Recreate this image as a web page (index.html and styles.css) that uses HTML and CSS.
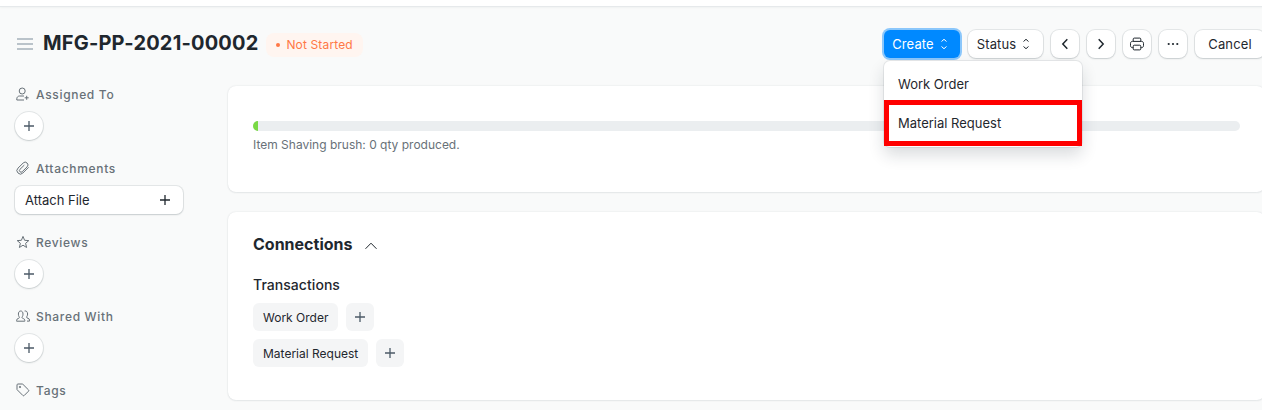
FILE: index.html
```html
<!DOCTYPE html>
<html lang="en">
<head>
<meta charset="utf-8">
<title>MFG-PP-2021-00002</title>
<link rel="stylesheet" href="styles.css">
</head>
<body>
<svg class="defs" width="0" height="0" aria-hidden="true">
  <symbol id="plus" viewBox="0 0 16 16"><path d="M8 3v10M3 8h10"/></symbol>
  <symbol id="select" viewBox="0 0 16 16"><path d="M5.5 5.500 8 3.300l2.500 2.200M5.500 10.500 8 12.700l2.500-2.200"/></symbol>
</svg>
<div class="page">
  <div class="navbar"></div>
  <header class="page-head">
    <svg class="menu" viewBox="0 0 16 12"><path d="M0 1h16M0 6h16M0 11h16"/></svg>
    <h1 class="title">MFG-PP-2021-00002</h1>
    <span class="indicator"><i class="dot"></i>Not Started</span>
    <div class="actions">
      <div class="dropdown">
        <button class="btn btn-primary">Create<svg class="icon select"><use href="#select"/></svg></button>
        <div class="dropdown-menu">
          <a class="item">Work Order</a>
          <a class="item highlighted">Material Request</a>
        </div>
      </div>
      <button class="btn btn-status">Status<svg class="icon select"><use href="#select"/></svg></button>
      <button class="btn btn-icon"><svg class="icon bold" viewBox="0 0 16 16"><path d="M10.300 3.200 5.800 8l4.500 4.800"/></svg></button>
      <button class="btn btn-icon"><svg class="icon bold" viewBox="0 0 16 16"><path d="M5.700 3.200 10.200 8l-4.500 4.800"/></svg></button>
      <button class="btn btn-icon"><svg class="icon" viewBox="0 0 16 16"><path d="M4.200 5V3.100c0-.6.4-1 1-1h5.600c.6 0 1 .4 1 1V5M4.200 11.600H3.400c-1.100 0-1.900-.8-1.900-1.900V7.300c0-1.100.8-1.900 1.900-1.900h9.200c1.100 0 1.900.8 1.900 1.900v2.400c0 1.100-.8 1.900-1.900 1.900h-.8M5.200 9.200h5.600c.6 0 1 .4 1 1v2.700c0 .6-.4 1-1 1H5.200c-.6 0-1-.4-1-1v-2.700c0-.6.4-1 1-1z"/></svg></button>
      <button class="btn btn-icon"><svg class="icon solid" viewBox="0 0 16 16"><circle cx="3.700" cy="8" r="1.100"/><circle cx="8" cy="8" r="1.100"/><circle cx="12.300" cy="8" r="1.100"/></svg></button>
      <button class="btn btn-cancel">Cancel</button>
    </div>
  </header>
  <div class="body">
    <aside class="sidebar">
      <section class="side-section">
        <h2 class="label"><svg class="side-icon" viewBox="0 0 14 14"><circle cx="6.200" cy="4" r="3"/><path d="M8 9H3.500C2 9 .8 10.300.8 11.800V13H8M10.700 8.800v4M8.700 10.800h4"/></svg>Assigned To</h2>
        <button class="round"><svg class="icon plus"><use href="#plus"/></svg></button>
      </section>
      <section class="side-section">
        <h2 class="label"><svg class="side-icon" viewBox="0 0 14 14"><path d="m12.600 6.300-5.700 5.700a3.400 3.400 0 0 1-4.900 0 3.400 3.400 0 0 1 0-4.900l5.200-5.100a2.700 2.700 0 0 1 3.900 0 2.700 2.700 0 0 1 0 3.900l-4.900 4.800a1.600 1.600 0 0 1-2.300 0 1.600 1.600 0 0 1 0-2.300l4.400-4.300"/></svg>Attachments</h2>
        <button class="attach">Attach File<svg class="icon plus"><use href="#plus"/></svg></button>
      </section>
      <section class="side-section">
        <h2 class="label"><svg class="side-icon" viewBox="0 0 14 14"><path d="m7 1.400 1.600 3.900 4.200.3-3.200 2.700 1 4.200L7 10.200l-3.600 2.300 1-4.200-3.200-2.700 4.200-.3z"/></svg>Reviews</h2>
        <button class="round"><svg class="icon plus"><use href="#plus"/></svg></button>
      </section>
      <section class="side-section">
        <h2 class="label"><svg class="side-icon" viewBox="0 0 14 14"><path d="M.6 12.200v-.8c0-1 .5-1.500 1.400-1.800 1-.3 1.400-.6 1.400-1.200 0-.5-1-1.200-1-3.300 0-1.900.8-3.100 2.300-3.100S7 3.200 7 5.100c0 2.100-1 2.800-1 3.300 0 .6.400.9 1.400 1.200.9.300 1.400.8 1.400 1.800v.8zM8.600 2c1.800-.4 3 .9 3 3 0 1.900-1 2.500-1 3.200 0 .6.500.8 1.400 1.100 1 .3 1.500.8 1.500 1.800v1H11"/></svg>Shared With</h2>
        <button class="round"><svg class="icon plus"><use href="#plus"/></svg></button>
      </section>
      <section class="side-section last">
        <h2 class="label"><svg class="side-icon" viewBox="0 0 14 14"><path d="M1 1.900c0-.5.400-.9.900-.9h4.300c.3 0 .5.100.7.300l5.600 5.600c.4.400.4.900 0 1.300l-4.300 4.300c-.4.400-.9.400-1.300 0L1.300 6.900A1 1 0 0 1 1 6.200z"/><circle cx="4" cy="4" r=".7"/></svg>Tags</h2>
      </section>
    </aside>
    <main class="content">
      <section class="card progress-card">
        <div class="progress"><div class="bar"></div></div>
        <p class="progress-text">Item Shaving brush: 0 qty produced.</p>
      </section>
      <section class="card connections">
        <h2 class="card-title">Connections<svg class="icon collapse" viewBox="0 0 16 16"><path d="M2.500 10.800 8 5.200l5.500 5.600"/></svg></h2>
        <h3 class="group-title">Transactions</h3>
        <div class="link-row"><a class="chip">Work Order</a><button class="chip chip-add"><svg class="icon plus"><use href="#plus"/></svg></button></div>
        <div class="link-row"><a class="chip">Material Request</a><button class="chip chip-add"><svg class="icon plus"><use href="#plus"/></svg></button></div>
      </section>
    </main>
  </div>
</div>
</body>
</html>
```
FILE: styles.css
```css
* { box-sizing: border-box; }
html, body { margin: 0; height: 410px; overflow: hidden; }
body { background: #f9fafa; color: #1f272e; font-family: Inter, sans-serif; font-size: 13px; letter-spacing: 0; }
button, h1, h2, h3, p { margin: 0; font: inherit; letter-spacing: inherit; color: inherit; }
.defs { display: block; height: 0; }
.page { width: 1265px; height: 410px; }
.navbar { height: 7px; background: #fff; border-bottom: 1px solid #e6e9eb; box-shadow: 0 1px 2px rgba(25, 39, 52, .04); }
.icon { width: 16px; height: 16px; fill: none; stroke: currentColor; stroke-width: 1; flex: none; }
.icon.bold { stroke-width: 1.5; }
.icon.plus { stroke-width: 1.3; }
.icon.solid { fill: currentColor; stroke: none; }

.page-head { display: flex; align-items: center; height: 74px; padding-left: 17px; }
.menu { width: 16px; height: 12px; stroke: #a5b1ba; stroke-width: 1.5; fill: none; }
.title { margin: -2px 0 0 10px; font-size: 20px; font-weight: 700; line-height: 24px; letter-spacing: .18px; white-space: nowrap; }
.indicator { display: flex; align-items: center; height: 24px; width: 97px; margin: 1px 0 0 8px; padding-left: 10px; border-radius: 8px; background: #fff5f0; color: #ff7846; font-size: 12px; letter-spacing: .14px; white-space: nowrap; }
.dot { width: 4px; height: 4px; margin-right: 6px; border-radius: 50%; background: currentColor; }
.actions { display: flex; gap: 8px; margin-left: auto; }
.btn { display: flex; align-items: center; justify-content: center; height: 28px; padding: 0; border: 0; border-radius: 8px; background: #fff; box-shadow: 0 0 0 1px rgba(25, 39, 52, .09), 0 1px 2px rgba(25, 39, 52, .14); letter-spacing: .13px; white-space: nowrap; }
.btn-primary { width: 76px; background: #0089ff; color: #fff; box-shadow: 0 0 0 2px #8bc7fb; border-radius: 6px; }
.btn-status { width: 75px; }
.btn-icon { width: 28px; }
.btn-cancel { width: 70px; }
.select { margin-left: 2px; }
.dropdown { position: relative; }
.dropdown-menu { position: absolute; z-index: 2; top: 31px; left: 0; width: 198px; height: 86px; padding-top: 4px; border-radius: 6px; background: #fff; box-shadow: 0 0 0 1px rgba(25, 39, 52, .08), 0 8px 16px rgba(25, 39, 52, .16); }
.item { display: flex; align-items: center; height: 38px; padding-left: 14px; }
.item.highlighted { height: 46px; margin-top: -3px; padding-left: 9px; border: 5px solid #f00; }

.body { display: grid; grid-template-columns: 228px 1037px; height: 329px; }
.sidebar { padding: 4px 0 0 14px; color: #687178; }
.side-section { height: 74px; }
.side-section.last { height: 24px; }
.label { display: flex; align-items: center; height: 18px; gap: 6px; padding-left: 2px; font-size: 12px; font-weight: 500; letter-spacing: .68px; }
.side-icon { width: 14px; height: 14px; fill: none; stroke: currentColor; stroke-width: 1; stroke-linejoin: round; }
.round, .attach { display: flex; align-items: center; justify-content: center; height: 28px; margin: 9px 0 0 1px; padding: 0; border: 0; background: #fff; box-shadow: 0 0 0 1px rgba(25, 39, 52, .09), 0 1px 2px rgba(25, 39, 52, .14); }
.round { width: 28px; border-radius: 50%; color: #4c5a67; }
.attach { width: 168px; justify-content: space-between; padding: 0 10px; border-radius: 7px; color: #1f272e; }
.content { display: flex; flex-direction: column; gap: 20px; padding-top: 5px; }
.card { border-radius: 8px; background: #fff; box-shadow: 0 0 2px rgba(25, 39, 52, .12), 0 1px 2px rgba(25, 39, 52, .06); }
.progress-card { height: 106px; padding: 35px 25px 0; }
.progress { height: 10px; overflow: hidden; border-radius: 5px; background: #ebeef0; }
.bar { width: 5px; height: 10px; background: #79d945; }
.progress-text { margin-top: 5px; color: #687178; font-size: 12px; line-height: 18px; letter-spacing: 0; }
.connections { height: 188px; padding: 20px 25px 0; }
.card-title { display: flex; align-items: center; height: 23px; font-size: 16px; font-weight: 700; }
.collapse { margin: 4px 0 0 11px; }
.group-title { margin: 20px 0 8px; font-size: 14px; font-weight: 500; line-height: 20px; letter-spacing: .05px; }
.link-row { display: flex; gap: 8px; margin-bottom: 8px; }
.chip { display: flex; align-items: center; height: 28px; padding: 0 10px; border: 0; border-radius: 6px; background: #f4f5f6; font-size: 12px; letter-spacing: 0; }
.chip-add { width: 28px; justify-content: center; padding: 0; color: #4c5a67; }
```
